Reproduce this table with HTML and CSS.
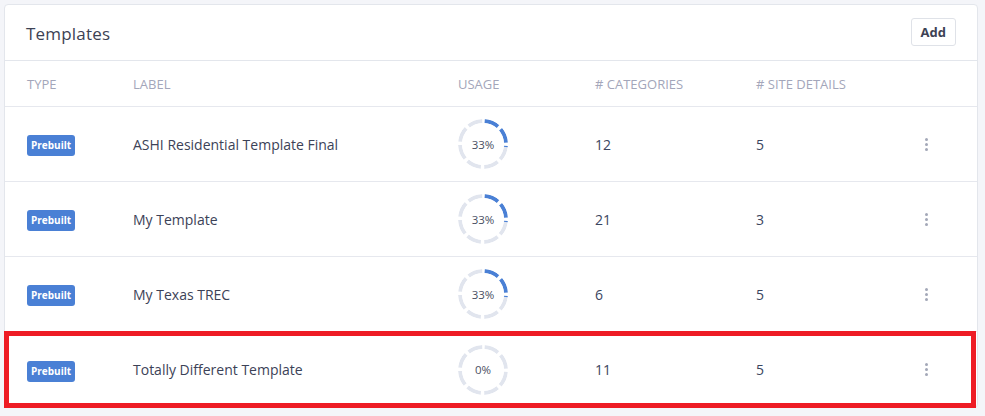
FILE: index.html
```html
<!DOCTYPE html>
<html>
<head>
<meta charset="utf-8">
<link rel="stylesheet" href="styles.css">
</head>
<body>
<div class="card">
  <div class="card-head">
    <h2 class="title">Templates</h2>
    <button class="btn">Add</button>
  </div>
  <div class="row thead">
    <div>TYPE</div><div>LABEL</div><div>USAGE</div><div># CATEGORIES</div><div># SITE DETAILS</div><div></div>
  </div>
  <div class="row">
    <div><span class="badge">Prebuilt</span></div>
    <div class="label">ASHI Residential Template Final</div>
    <div><div class="donut"><svg viewBox="0 0 52 52" width="52" height="52"><defs><mask id="m1"><circle cx="26" cy="26" r="23" class="dash" stroke="#fff"/></mask></defs><g mask="url(#m1)"><circle cx="26" cy="26" r="23" class="track"/><circle cx="26" cy="26" r="23" class="fill" stroke-dasharray="39 200"/></g></svg><span>33%</span></div></div>
    <div class="num">12</div>
    <div class="num">5</div>
    <div class="menu"><span class="kebab"><i></i><i></i><i></i></span></div>
  </div>
  <div class="row">
    <div><span class="badge">Prebuilt</span></div>
    <div class="label">My Template</div>
    <div><div class="donut"><svg viewBox="0 0 52 52" width="52" height="52"><defs><mask id="m2"><circle cx="26" cy="26" r="23" class="dash" stroke="#fff"/></mask></defs><g mask="url(#m2)"><circle cx="26" cy="26" r="23" class="track"/><circle cx="26" cy="26" r="23" class="fill" stroke-dasharray="39 200"/></g></svg><span>33%</span></div></div>
    <div class="num">21</div>
    <div class="num">3</div>
    <div class="menu"><span class="kebab"><i></i><i></i><i></i></span></div>
  </div>
  <div class="row">
    <div><span class="badge">Prebuilt</span></div>
    <div class="label">My Texas TREC</div>
    <div><div class="donut"><svg viewBox="0 0 52 52" width="52" height="52"><defs><mask id="m3"><circle cx="26" cy="26" r="23" class="dash" stroke="#fff"/></mask></defs><g mask="url(#m3)"><circle cx="26" cy="26" r="23" class="track"/><circle cx="26" cy="26" r="23" class="fill" stroke-dasharray="39 200"/></g></svg><span>33%</span></div></div>
    <div class="num">6</div>
    <div class="num">5</div>
    <div class="menu"><span class="kebab"><i></i><i></i><i></i></span></div>
  </div>
  <div class="row last highlight">
    <div><span class="badge">Prebuilt</span></div>
    <div class="label">Totally Different Template</div>
    <div><div class="donut"><svg viewBox="0 0 52 52" width="52" height="52"><defs><mask id="m4"><circle cx="26" cy="26" r="23" class="dash" stroke="#fff"/></mask></defs><g mask="url(#m4)"><circle cx="26" cy="26" r="23" class="track"/></g></svg><span>0%</span></div></div>
    <div class="num">11</div>
    <div class="num">5</div>
    <div class="menu"><span class="kebab"><i></i><i></i><i></i></span></div>
  </div>
</div>
</body>
</html>
```
FILE: styles.css
```css
* { box-sizing: border-box; }
html, body { margin: 0; }
body {
  background: #f4f5f9;
  font-family: "Open Sans", "Noto Sans", sans-serif;
  color: #3c4257;
  padding: 4px 7px 0 4px;
}
.card {
  background: #fff;
  border: 1px solid #e3e6ec;
  border-radius: 4px;
  width: 974px;
}
.card-head {
  height: 56px;
  display: flex;
  align-items: center;
  justify-content: space-between;
  padding: 0 21px 0 21px;
  border-bottom: 1px solid #e3e6ec;
}
.title {
  margin: 0;
  font-weight: 400;
  font-size: 17px;
  color: #3d4254;
  letter-spacing: 0.2px;
  position: relative;
  top: 1px;
}
.btn {
  font-family: inherit;
  font-weight: 700;
  font-size: 13px;
  color: #3d4254;
  background: #fff;
  border: 1px solid #dfe2e8;
  border-radius: 3px;
  height: 28px;
  padding: 0 9px;
  position: relative;
  top: -1px;
}
.row {
  display: grid;
  grid-template-columns: 106px 325px 137px 161px 170px 1fr;
  align-items: center;
  padding-left: 22px;
  height: 75px;
  border-bottom: 1px solid #e6e8ee;
  font-size: 14px;
  color: #3c4257;
}
.row.thead {
  height: 46px;
  font-size: 13px;
  color: #a3a6ba;
}
.row.last { border-bottom: none; }
.highlight { position: relative; }
.highlight::after {
  content: "";
  position: absolute;
  top: -1px;
  bottom: -1px;
  left: -1px;
  right: 1px;
  border: 5px solid #ee1c25;
  pointer-events: none;
}
.label { font-size: 14px; }
.num { color: #3b4660; }
.badge {
  display: inline-block;
  background: #4a80d5;
  color: #fff;
  font-size: 10px;
  font-weight: 700;
  line-height: 21px;
  height: 21px;
  padding: 0 4px;
  border-radius: 3px;
  position: relative;
  top: 1px;
}
.donut {
  position: relative;
  width: 52px;
  height: 52px;
  margin-left: -1px;
}
.donut svg { display: block; transform: rotate(-90deg); }
.donut span {
  position: absolute;
  inset: 0;
  display: flex;
  align-items: center;
  justify-content: center;
  font-size: 11.5px;
  color: #4a4f63;
}
.dash {
  fill: none;
  stroke-width: 4;
  stroke-dasharray: 14.5 3.56;
  stroke-dashoffset: -1.8;
}
.track { fill: none; stroke: #e1e5ee; stroke-width: 4; }
.fill { fill: none; stroke: #4a80d5; stroke-width: 4; }
.menu { display: flex; align-items: center; }
.kebab {
  display: flex;
  flex-direction: column;
  gap: 2px;
  margin-left: -1px;
}
.kebab i {
  display: block;
  width: 3px;
  height: 3px;
  border-radius: 50%;
  background: #a3a8b8;
}
```
